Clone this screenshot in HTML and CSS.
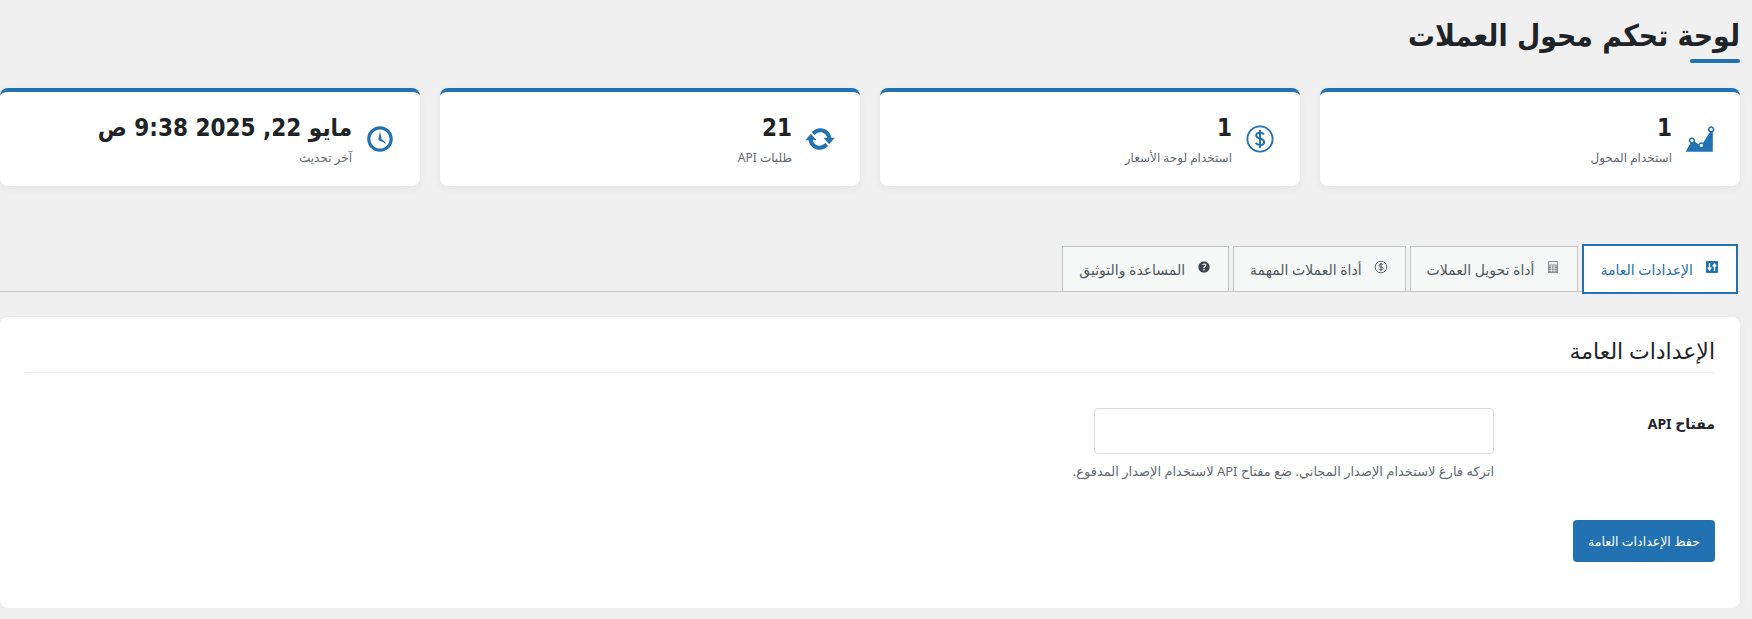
FILE: index.html
```html
<!DOCTYPE html>
<html lang="ar" dir="rtl">
<head>
    <meta charset="UTF-8">
    <title>لوحة تحكم محول العملات</title>
    <link rel="stylesheet" href="styles.css">
</head>
<body>
    <div class="wrap">
        <h1 class="page-title">لوحة تحكم محول العملات</h1>

        <div class="stats">
            <div class="stat-card">
                <svg class="stat-icon" viewBox="0 0 20 20"><path d="M18 18l.01-12.28c.59-.35.99-.99.99-1.72 0-1.1-.9-2-2-2s-2 .9-2 2c0 .8.47 1.48 1.14 1.8l-4.13 6.58c-.33-.24-.73-.38-1.16-.38-.84 0-1.55.51-1.85 1.24l-2.14-1.53c.09-.22.14-.46.14-.71 0-1.11-.89-2-2-2-1.1 0-2 .89-2 2 0 .73.4 1.36.98 1.71L1 18h17zM17 3c.55 0 1 .45 1 1s-.45 1-1 1-1-.45-1-1 .45-1 1-1zM5 10c.55 0 1 .45 1 1s-.45 1-1 1-1-.45-1-1 .45-1 1-1zm5.85 3c.55 0 1 .45 1 1s-.45 1-1 1-1-.45-1-1 .45-1 1-1z"/></svg>
                <div>
                    <div class="stat-value">1</div>
                    <div class="stat-label">استخدام المحول</div>
                </div>
            </div>
            <div class="stat-card">
                <svg class="stat-icon" viewBox="0 0 32 32"><circle cx="16" cy="16" r="12.6" fill="none" stroke="#2271b1" stroke-width="1.8"/><path d="M20 11.600c-.8-1.300-2.200-1.900-4-1.900-2.200 0-3.800 1.100-3.800 2.900 0 4 8 2.200 8 6.400 0 1.900-1.800 3-4.200 3-1.900 0-3.500-.8-4.300-2.200M16 7v18" fill="none" stroke="#2271b1" stroke-width="2"/></svg>
                <div>
                    <div class="stat-value">1</div>
                    <div class="stat-label">استخدام لوحة الأسعار</div>
                </div>
            </div>
            <div class="stat-card">
                <svg class="stat-icon" viewBox="0 0 20 20"><path d="M10.2 3.28c3.53 0 6.43 2.61 6.92 6h2.08l-3.5 4-3.5-4h2.32c-.45-1.97-2.21-3.45-4.32-3.45-1.45 0-2.73.71-3.54 1.78L4.95 5.66C6.23 4.2 8.11 3.28 10.2 3.28zm-.4 13.44c-3.52 0-6.43-2.61-6.92-6H.8l3.5-4c1.17 1.33 2.33 2.67 3.5 4H5.48c.45 1.97 2.21 3.45 4.32 3.45 1.45 0 2.73-.71 3.54-1.78l1.71 1.95c-1.28 1.46-3.15 2.38-5.25 2.38z"/></svg>
                <div>
                    <div class="stat-value">21</div>
                    <div class="stat-label">طلبات API</div>
                </div>
            </div>
            <div class="stat-card">
                <svg class="stat-icon" viewBox="0 0 20 20"><path d="M10 2c4.420 0 8 3.580 8 8s-3.580 8-8 8-8-3.580-8-8 3.580-8 8-8zm0 14c3.310 0 6-2.690 6-6s-2.690-6-6-6-6 2.690-6 6 2.690 6 6 6zm-.71-5.290c.07.05.14.1.23.15l-.02.02L14 13l-3.030-3.190L10 5l-.97 4.810h.01c0 .02-.01.05-.02.09S9 9.970 9 10c0 .28.1.52.29.71z"/></svg>
                <div>
                    <div class="stat-value">مايو 22, 2025 9:38 ص</div>
                    <div class="stat-label">آخر تحديث</div>
                </div>
            </div>
        </div>

        <div class="tabs">
            <a class="tab active">
                <svg class="tab-icon" viewBox="0 0 16 16"><rect x="2" y="2" width="12" height="12" rx="1" fill="#2271b1"/><path d="M5.500 4v6M3.700 8.500l1.800 2.500 1.800-2.500M10.500 12V6M8.700 7.500l1.800-2.500 1.800 2.500" fill="none" stroke="#fff" stroke-width="1.300"/></svg>
                الإعدادات العامة
            </a>
            <a class="tab">
                <svg class="tab-icon" viewBox="0 0 16 16"><rect x="3" y="2" width="10" height="12" fill="#8c8f94"/><rect x="4" y="3" width="8" height="2.500" fill="#f6f7f7"/><path d="M4 7h8M4 9.300h8M4 11.600h8M6.500 6v7M9.200 6v7" stroke="#f6f7f7" stroke-width=".6" fill="none"/></svg>
                أداة تحويل العملات
            </a>
            <a class="tab">
                <svg class="tab-icon" viewBox="0 0 16 16"><circle cx="8" cy="8" r="5.800" fill="none" stroke="#646970"/><path d="M10 6c-.4-.7-1.100-1-2-1-1.100 0-1.900.5-1.900 1.400C6.100 8.400 10 7.500 10 9.600c0 .9-.9 1.400-2 1.400-1 0-1.800-.4-2.200-1.100M8 3.800v8.400" fill="none" stroke="#50575e"/></svg>
                أداة العملات المهمة
            </a>
            <a class="tab">
                <svg class="tab-icon" viewBox="0 0 20 20"><path fill="#3c434a" d="M17 10c0-3.870-3.140-7-7-7-3.870 0-7 3.130-7 7 0 3.860 3.130 7 7 7 3.860 0 7-3.140 7-7zm-6.300 1.480H9.140v-.43c0-.38.08-.7.24-.98s.46-.57.88-.89c.41-.29.68-.53.81-.71.14-.18.2-.39.2-.62 0-.25-.09-.44-.28-.58-.19-.13-.45-.19-.79-.19-.58 0-1.250.19-2 .57l-.64-1.280c.87-.49 1.800-.74 2.770-.74.81 0 1.450.2 1.920.58.48.39.71.91.71 1.550 0 .43-.09.8-.29 1.110-.19.32-.57.67-1.110 1.060-.38.28-.61.49-.71.63-.1.15-.15.34-.15.57v.35zm-1.470 2.740c-.18-.18-.27-.42-.27-.73 0-.33.08-.58.26-.75s.43-.25.77-.25c.32 0 .57.09.75.26s.27.42.27.74c0 .3-.09.55-.27.72-.18.18-.43.27-.75.27-.33 0-.58-.09-.76-.26z"/></svg>
                المساعدة والتوثيق
            </a>
        </div>

        <div class="panel">
            <h2 class="panel-title">الإعدادات العامة</h2>
            <div class="form-row">
                <label class="form-label" for="apiKey">مفتاح API</label>
                <div>
                    <input class="form-input" type="text" id="apiKey">
                    <p class="form-help">اتركه فارغ لاستخدام الإصدار المجاني. ضع مفتاح API لاستخدام الإصدار المدفوع.</p>
                </div>
            </div>
            <button class="save-button">حفظ الإعدادات العامة</button>
        </div>
    </div>
</body>
</html>
```

FILE: styles.css
```css
* {
    box-sizing: border-box;
}
body {
    margin: 0;
    background-color: #f0f0f0;
    color: #1d2327;
    font-family: "Noto Sans", "DejaVu Sans", sans-serif;
    font-size: 13px;
    overflow: hidden;
}
.wrap {
    width: 1740px;
    margin-left: 0;
    margin-right: 12px;
}
.page-title {
    position: relative;
    width: max-content;
    margin: 0;
    padding: 17px 0 34px;
    font-family: "DejaVu Sans Condensed", "DejaVu Sans", sans-serif;
    font-size: 29.8px;
    line-height: 37px;
    font-weight: 700;
}
.page-title::after {
    content: "";
    position: absolute;
    right: 0;
    bottom: 25px;
    width: 50px;
    height: 4px;
    border-radius: 2px;
    background-color: #2271b1;
}
.stats {
    display: grid;
    grid-template-columns: repeat(4, 420px);
    gap: 20px;
}
.stat-card {
    display: flex;
    align-items: center;
    gap: 12px;
    height: 98px;
    padding: 0 24px;
    background-color: #fff;
    border-top: 4px solid #2271b1;
    border-radius: 8px;
    box-shadow: 0 2px 10px rgba(0, 0, 0, 0.05);
}
.stat-icon {
    width: 32px;
    height: 32px;
    fill: #2271b1;
    flex-shrink: 0;
}
.stat-value {
    font-family: "DejaVu Sans Condensed", "DejaVu Sans", sans-serif;
    font-size: 24px;
    line-height: 30px;
    font-weight: 700;
}
.stat-label {
    margin-top: 7px;
    font-size: 12px;
    line-height: 16px;
    color: #646970;
}
.tabs {
    display: flex;
    align-items: flex-start;
    gap: 4px;
    height: 48px;
    margin-top: 58px;
    padding-right: 2px;
    border-bottom: 1px solid #c3c4c7;
}
.tab {
    display: flex;
    align-items: center;
    gap: 11px;
    height: 45px;
    margin-top: 2px;
    padding: 0 16px;
    background-color: #f6f7f7;
    border: 1px solid #c3c4c7;
    border-bottom: none;
    color: #50575e;
    font-size: 14px;
}
.tab.active {
    height: 50px;
    margin-top: 0;
    background-color: #fff;
    border: 2px solid #2271b1;
    color: #2271b1;
}
.tab-icon {
    width: 16px;
    height: 16px;
    margin-top: -4px;
    flex-shrink: 0;
}
.panel {
    height: 291px;
    margin-top: 25px;
    padding: 20px 25px;
    background-color: #fff;
    border-radius: 8px;
    box-shadow: 0 2px 10px rgba(0, 0, 0, 0.05);
}
.panel-title {
    margin: 0;
    padding-bottom: 8px;
    border-bottom: 1px solid #eee;
    font-size: 22px;
    line-height: 27px;
    font-weight: 400;
}
.form-row {
    display: grid;
    grid-template-columns: 221px 1fr;
    margin-top: 35px;
}
.form-label {
    padding-top: 6px;
    font-size: 14px;
    font-weight: 700;
}
.form-input {
    display: block;
    width: 400px;
    height: 46px;
    background-color: #fff;
    border: 1px solid #ddd;
    border-radius: 4px;
}
.form-help {
    margin: 8px 0 0;
    color: #646970;
    font-size: 13px;
}
.save-button {
    display: block;
    width: 142px;
    height: 42px;
    margin-top: 40px;
    background-color: #2271b1;
    border: none;
    border-radius: 4px;
    color: #fff;
    font-family: inherit;
    font-size: 12.5px;
}
```
